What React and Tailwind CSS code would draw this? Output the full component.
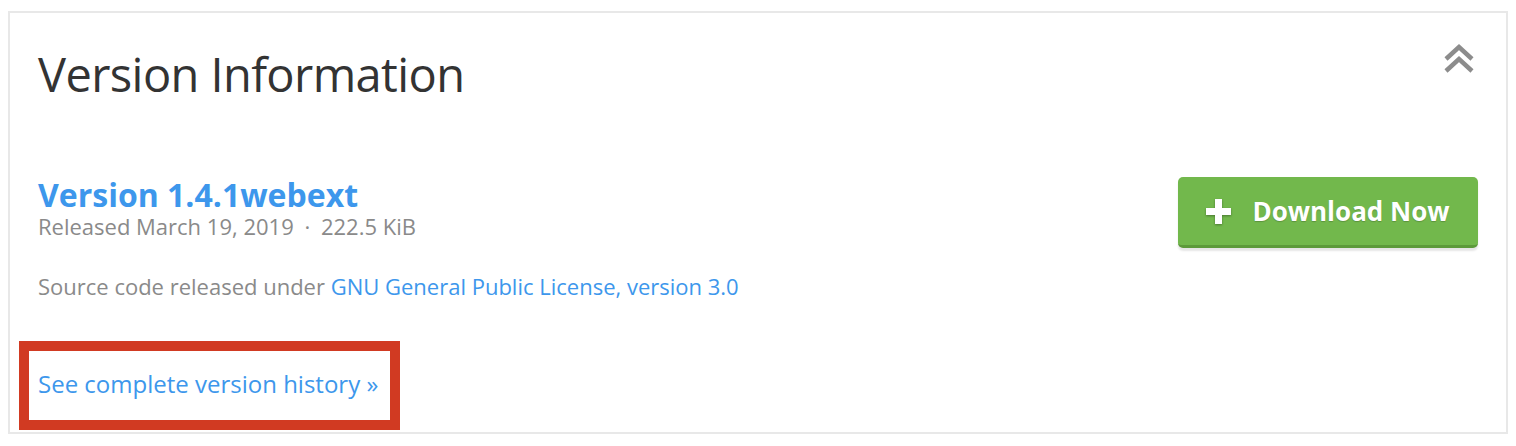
export default function App() {
  return (
    <div className="min-h-[446px] bg-white pt-[11px] px-[8px] font-['Open_Sans',_'Liberation_Sans',_sans-serif]">
      <div className="border-2 border-[#e8e8e8] pt-[29px] px-[28px] pb-[2px]">
        {/* Header */}
        <div className="flex items-start justify-between">
          <h1 className="text-[47px] leading-[65px] tracking-[-0.6px] text-[#333333] font-normal">Version Information</h1>
          <svg width="32" height="32" viewBox="0 0 32 32" className="-mt-[1px] mr-[3px]" fill="none" stroke="#8c8c8c" strokeWidth="4.5">
            <path d="M3 18 L16 6 L29 18" />
            <path d="M3 30 L16 18 L29 30" />
          </svg>
        </div>

        {/* Version */}
        <div className="mt-[70px] flex items-start justify-between">
          <div className="pt-[1px]">
            <h2 className="text-[32px] leading-[34px] font-bold text-[#3d97ec]">Version 1.4.1webext</h2>
            <p className="text-[22px] leading-[28px] text-[#8a8a8a]">
              Released March 19, 2019 <span className="mx-[5px]">·</span> 222.5 KiB
            </p>
            <p className="mt-[32px] text-[22px] leading-[28px] text-[#8a8a8a]">
              Source code released under{" "}
              <a href="#" className="text-[#3d97ec]">GNU General Public License, version 3.0</a>
            </p>
          </div>
          <button className="w-[300px] h-[71px] rounded-[5px] bg-[#72b84c] border-b-[3px] border-[#5c9a3a] shadow-[0_3px_2px_rgba(0,0,0,0.1)] flex items-center justify-center gap-[21px]">
            <svg width="25" height="25" viewBox="0 0 25 25" className="drop-shadow-[0_1px_1px_rgba(0,0,0,0.35)]">
              <rect x="9" y="0" width="7" height="25" fill="white" />
              <rect x="0" y="9" width="25" height="7" fill="white" />
            </svg>
            <span className="text-[26px] leading-[34px] font-bold text-white [text-shadow:0_1px_1px_rgba(0,0,0,0.2)]">Download Now</span>
          </button>
        </div>

        {/* History link */}
        <div className="mt-[41px] -ml-[19px] w-[381px] h-[89px] border-[10px] border-[#d13a22] pt-[17px] pl-[9px]">
          <a href="#" className="text-[24px] leading-[32px] text-[#3d97ec]">See complete version history »</a>
        </div>
      </div>
    </div>
  );
}
